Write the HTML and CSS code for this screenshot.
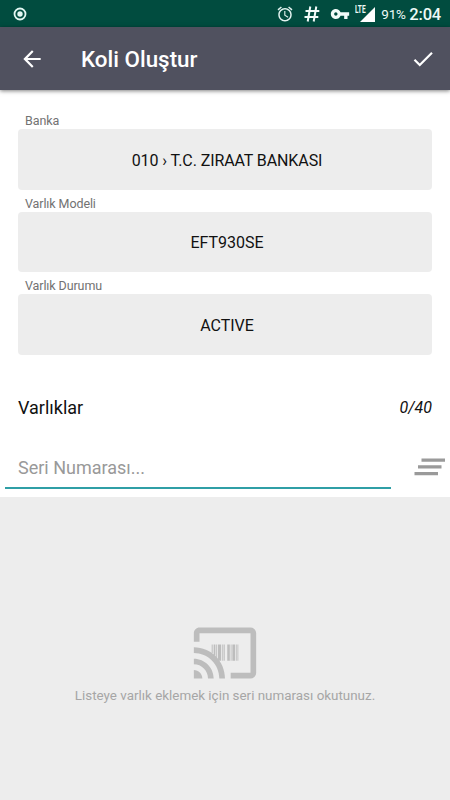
FILE: index.html
```
<!DOCTYPE html>
<html lang="tr">
<head>
<meta charset="utf-8">
<title>Koli Oluştur</title>
<link rel="stylesheet" href="styles.css">
</head>
<body>
<div class="status">
  <svg class="record" width="14" height="14" viewBox="0 0 14 14"><circle cx="7" cy="7" r="5.5" fill="none" stroke="#e3f8f3" stroke-width="1.8"/><circle cx="7" cy="7" r="2.7" fill="#e3f8f3"/></svg>
  <svg class="alarm" width="18" height="18" viewBox="0 0 24 24"><path fill="#e3f3f0" d="M22 5.72l-4.6-3.86-1.29 1.53 4.6 3.86L22 5.72zM7.88 3.39L6.6 1.86 2 5.71l1.29 1.53 4.59-3.85zM12.5 8H11v6l4.75 2.85.75-1.23-4-2.37V8zM12 4c-4.97 0-9 4.03-9 9s4.02 9 9 9c4.97 0 9-4.03 9-9s-4.03-9-9-9zm0 16c-3.87 0-7-3.13-7-7s3.13-7 7-7 7 3.13 7 7-3.13 7-7 7z"/></svg>
  <svg class="hash" width="16" height="16" viewBox="0 0 16 16"><path fill="none" stroke="#f2fbf9" stroke-width="2" d="M6.3 .5L3.7 15.5M12.3 .5L9.7 15.5M1.5 5H15.3M.5 11H14.3"/></svg>
  <svg class="key" width="20" height="20" viewBox="0 0 24 24"><path fill="#f2fbf9" d="M12.65 10C11.83 7.67 9.61 6 7 6c-3.31 0-6 2.69-6 6s2.69 6 6 6c2.61 0 4.83-1.67 5.65-4H17v4h4v-4h2v-4H12.65zM7 14c-1.1 0-2-.9-2-2s.9-2 2-2 2 .9 2 2-.9 2-2 2z"/></svg>
  <div class="network">
    <svg width="15" height="15" viewBox="0 0 15 15"><path fill="#fff" d="M0 15L15 0V15z"/></svg>
    <span class="lte">LTE</span>
  </div>
  <span class="battery">91%</span>
  <span class="clock">2:04</span>
</div>
<header class="appbar">
  <svg class="back" width="26" height="26" viewBox="0 0 24 24"><path fill="#fff" d="M20 11H7.83l5.59-5.59L12 4l-8 8 8 8 1.41-1.41L7.83 13H20v-2z"/></svg>
  <h1>Koli Oluştur</h1>
  <svg class="done" width="26" height="26" viewBox="0 0 24 24"><path fill="#fff" d="M9 16.17L4.83 12l-1.42 1.41L9 19 21 7l-1.41-1.41z"/></svg>
</header>
<main>
  <div class="fields">
    <div class="label">Banka</div>
    <div class="box bank">010 › T.C. ZIRAAT BANKASI</div>
    <div class="label">Varlık Modeli</div>
    <div class="box">EFT930SE</div>
    <div class="label">Varlık Durumu</div>
    <div class="box">ACTIVE</div>
  </div>
  <div class="summary"><span>Varlıklar</span><span class="count">0/40</span></div>
  <div class="entry">
    <div class="serial">Seri Numarası...</div>
    <svg class="clear" width="32" height="20" viewBox="0 0 32 20"><path fill="#9a9a9a" d="M7.5 1.5H31V4.7H7.5zM4 8.3H27.5V11.5H4zM.5 15.1H24V18.3H.5z"/></svg>
  </div>
</main>
<section class="empty">
  <svg width="68" height="68" viewBox="0 0 24 24">
    <path fill="#bdbdbd" d="M21 3H3c-1.1 0-2 .9-2 2v3h2V5h18v14h-7v2h7c1.1 0 2-.9 2-2V5c0-1.1-.9-2-2-2zM1 18v3h3c0-1.66-1.34-3-3-3zm0-4v2c2.76 0 5 2.24 5 5h2c0-3.87-3.13-7-7-7zm0-4v2c4.97 0 9 4.03 9 9h2c0-6.08-4.93-11-11-11z"/>
    <path fill="#bdbdbd" d="M7.3 9H7.65V12H7.3zM8 9H8.6V13H8zM8.9 9H9.2V14H8.9zM9.5 9H10.6V14.7H9.5zM10.9 9H11.2V14.7H10.9zM11.5 9H11.9V14.7H11.5zM12.8 9H13.7V14.7H12.8zM14 9H14.3V14.7H14zM14.6 9H15.6V14.7H14.6zM15.9 9H16.15V14.7H15.9zM16.4 9H16.7V14.7H16.4z"/>
  </svg>
  <p>Listeye varlık eklemek için seri numarası okutunuz.</p>
</section>
</body>
</html>
```
FILE: styles.css
```
* { box-sizing: border-box; }
body {
  margin: 0;
  width: 450px;
  height: 800px;
  display: flex;
  flex-direction: column;
  overflow: hidden;
  background: #fff;
  font-family: Roboto, "Liberation Sans", sans-serif;
  color: #111;
}
svg { display: block; flex: none; }
.status {
  height: 27px;
  flex: none;
  display: flex;
  align-items: center;
  background: #014c3f;
  color: #eefaf7;
  padding: 1px 9px 0 13px;
}
.alarm { margin-left: auto; }
.hash { margin-left: 10px; }
.key { margin-left: 10px; }
.network { position: relative; margin-left: 10px; }
.lte {
  position: absolute;
  left: -5px;
  top: -2px;
  font-size: 10px;
  line-height: 10px;
  font-weight: 700;
  transform: scaleX(.66);
  transform-origin: left;
}
.battery { margin-left: 6px; font-size: 13.5px; letter-spacing: -0.2px; width: 28px; }
.clock { font-size: 16.5px; font-weight: 500; letter-spacing: -0.2px; }
.appbar {
  height: 63px;
  flex: none;
  display: flex;
  align-items: center;
  background: #50515f;
  padding: 0 14px 0 19px;
  box-shadow: 0 1px 4px rgba(0, 0, 0, .5);
}
.appbar h1 {
  margin: 1px auto 0 36px;
  font-size: 22.4px;
  font-weight: 500;
  color: #fff;
}
.fields { padding: 17px 18px 0; }
.label {
  height: 22px;
  padding: 5px 0 0 7px;
  font-size: 12.5px;
  line-height: 17px;
  letter-spacing: -0.1px;
  color: #727272;
}
.box {
  height: 60.5px;
  display: flex;
  align-items: center;
  justify-content: center;
  padding: 2px 0 0 4px;
  border-radius: 4px;
  background: #ededed;
  font-size: 16px;
}
.bank { letter-spacing: -0.1px; }
.summary {
  height: 90px;
  padding: 16px 18px 0;
  display: flex;
  align-items: center;
  justify-content: space-between;
  font-size: 18px;
}
.count { font-size: 16px; font-style: italic; }
.entry {
  height: 52.5px;
  display: flex;
  padding: 3px 4px 0 5px;
}
.serial {
  width: 386px;
  height: 41px;
  padding-left: 13px;
  border-bottom: 2px solid #2f9fa6;
  font-size: 18px;
  line-height: 39px;
  color: #999;
}
.clear { margin: 9px 0 0 23px; }
.empty {
  flex: 1;
  background: #ededed;
  display: flex;
  flex-direction: column;
  align-items: center;
  padding-top: 122px;
}
.empty p {
  margin: 0;
  font-size: 13.4px;
  line-height: 18px;
  color: #a6a6a6;
}
```
